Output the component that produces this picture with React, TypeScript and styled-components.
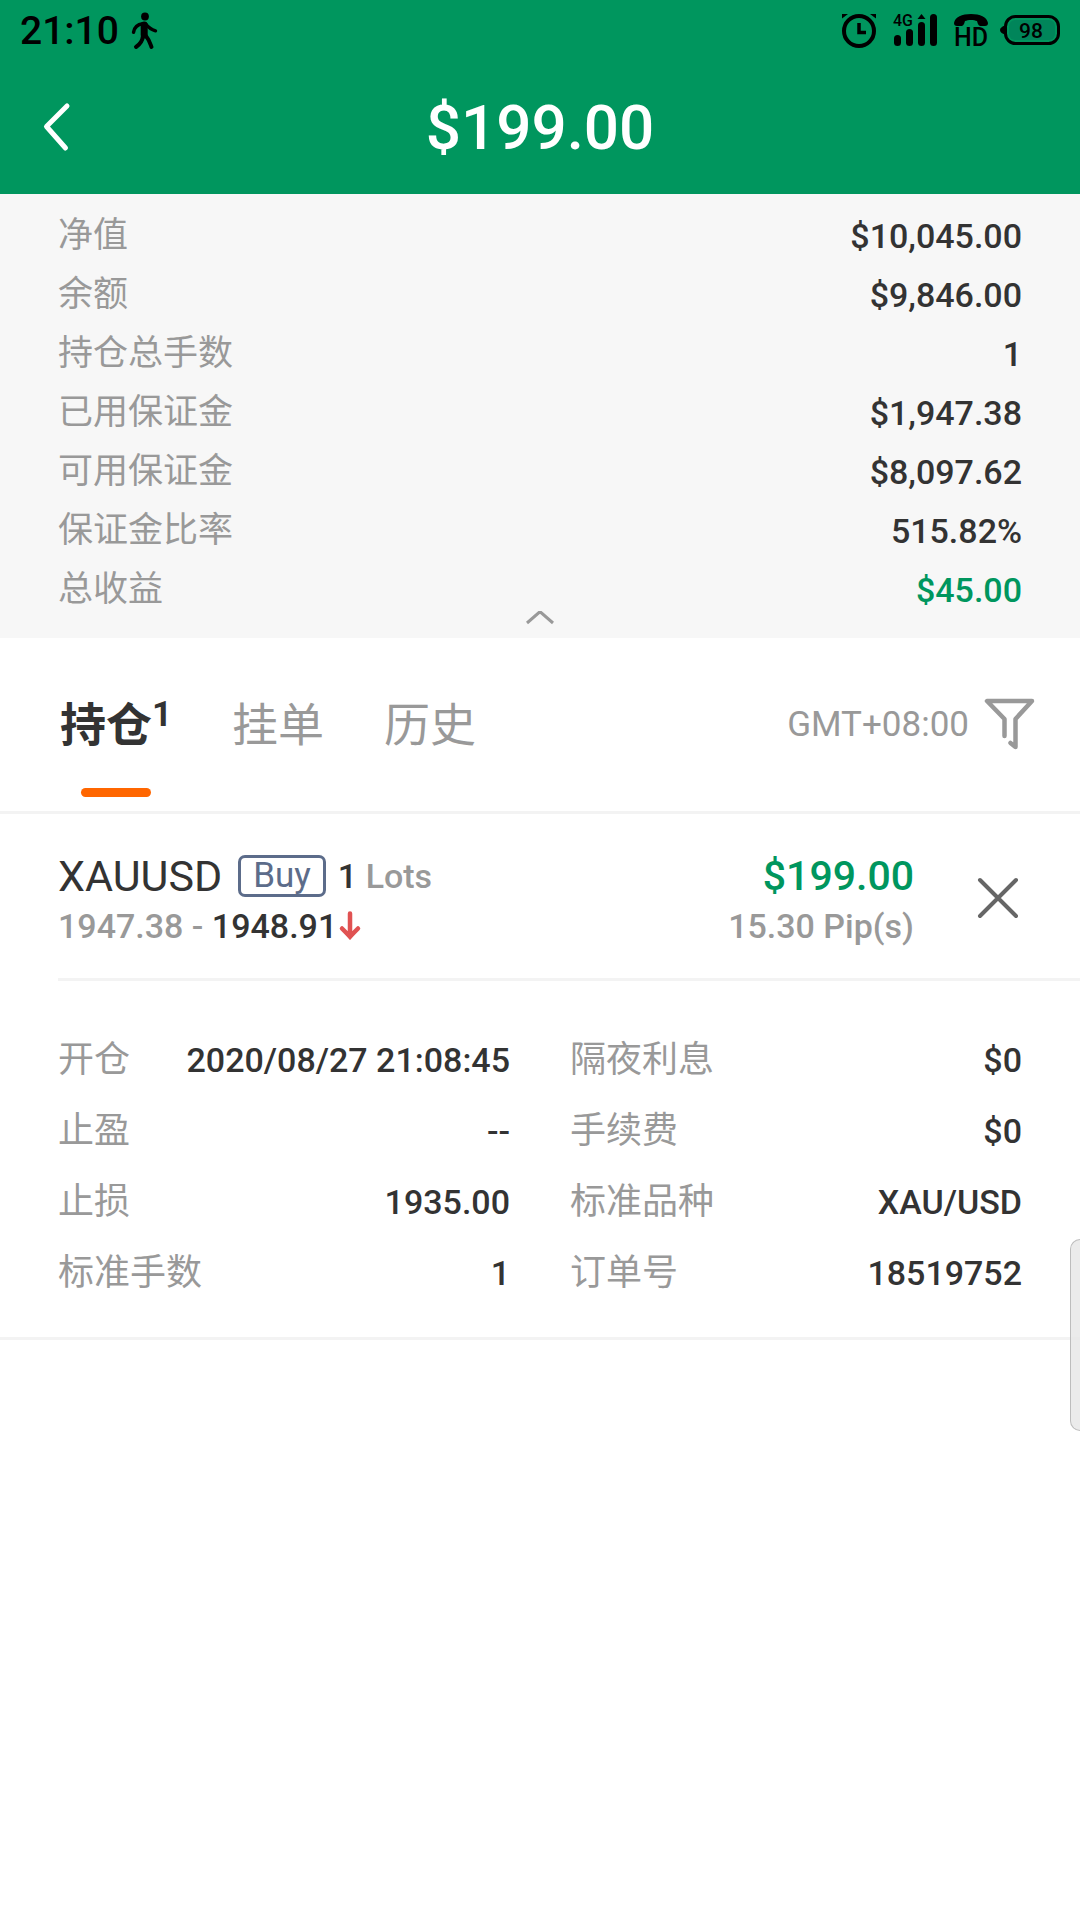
import React, { useState } from "react";
import styled, { createGlobalStyle } from "styled-components";

const green = "#00965e";
const ink = "#333333";
const muted = "#999999";
const rule = "#f3f3f3";

const GlobalStyle = createGlobalStyle`
  * { box-sizing: border-box; }
  body {
    margin: 0;
    background: #ffffff;
    color: ${ink};
    font-family: Roboto, "Noto Sans CJK SC", sans-serif;
    font-size: 34px;
    line-height: 50px;
  }
  button {
    margin: 0;
    padding: 0;
    border: 0;
    background: none;
    color: inherit;
    font: inherit;
    cursor: pointer;
  }
  dl, dd, h1, h2, p { margin: 0; }
  svg { display: block; flex: none; overflow: visible; }
`;

const Page = styled.div`
  position: relative;
  min-height: 100vh;
`;

const Top = styled.header`
  background: ${green};
`;

const StatusBar = styled.div`
  display: flex;
  align-items: center;
  justify-content: space-between;
  height: 62px;
  padding: 0 20px;
  color: #000000;
`;

const StatusGroup = styled.div`
  display: flex;
  align-items: center;
  gap: 12px;
`;

const Clock = styled.span`
  font-size: 39px;
  font-weight: 500;
`;

const TitleBar = styled.div`
  display: grid;
  grid-template-columns: 80px 1fr 80px;
  align-items: center;
  height: 132px;
  padding: 0 20px;
`;

const BackButton = styled.button`
  display: flex;
  align-items: center;
  height: 80px;
  padding-left: 20px;
`;

const Title = styled.h1`
  color: #ffffff;
  font-size: 62px;
  font-weight: 500;
  line-height: 72px;
  text-align: center;
`;

const Summary = styled.section`
  position: relative;
  padding: 12px 58px 19px;
  background: #f7f7f7;
`;

const SummaryRow = styled.div`
  display: flex;
  align-items: center;
  justify-content: space-between;
  height: 59px;
`;

const Label = styled.dt<{ $size: number }>`
  color: ${muted};
  font-size: ${(p) => p.$size}px;
`;

const Value = styled.dd<{ $gain?: boolean }>`
  color: ${(p) => (p.$gain ? green : ink)};
  font-weight: 500;
`;

const CollapseButton = styled.button`
  position: absolute;
  bottom: 0;
  left: 50%;
  padding: 12px 12px 14px;
  transform: translateX(-50%);
`;

const TabBar = styled.nav`
  display: flex;
  align-items: stretch;
  justify-content: space-between;
  height: 176px;
  padding: 0 44px 0 60px;
  border-bottom: 3px solid ${rule};
`;

const Tabs = styled.div`
  display: flex;
  gap: 60px;
`;

const Tab = styled.button<{ $active: boolean }>`
  position: relative;
  display: flex;
  align-items: center;
  color: ${(p) => (p.$active ? ink : muted)};
  font-size: 46px;
  font-weight: ${(p) => (p.$active ? 700 : 400)};

  &::after {
    content: "";
    position: absolute;
    bottom: 14px;
    left: calc(50% - 35px);
    width: 70px;
    height: 9px;
    border-radius: 5px;
    background: ${(p) => (p.$active ? "#ff6600" : "transparent")};
  }
`;

const Count = styled.span`
  padding-bottom: 20px;
  font-size: 35px;
`;

const Zone = styled.div`
  display: flex;
  align-items: center;
  gap: 15px;
  color: ${muted};
`;

const ZoneText = styled.span`
  font-size: 35px;
`;

const Position = styled.article`
  border-bottom: 3px solid ${rule};
`;

const PositionHead = styled.div`
  display: flex;
  align-items: center;
  margin-left: 58px;
  padding: 37px 58px 27px 0;
  border-bottom: 3px solid ${rule};
`;

const HeadColumn = styled.div<{ $end?: boolean }>`
  display: flex;
  flex: ${(p) => (p.$end ? "none" : "1")};
  flex-direction: column;
  align-items: ${(p) => (p.$end ? "flex-end" : "flex-start")};
`;

const Line = styled.div`
  display: flex;
  align-items: center;
  height: 50px;
  white-space: pre;
`;

const SymbolName = styled.h2`
  font-size: 43px;
  font-weight: 400;
`;

const Side = styled.span`
  margin: 0 12px 0 16px;
  padding: 0 12px;
  border: 3px solid #5c6c8a;
  border-radius: 7px;
  color: #5c6c8a;
  font-size: 35px;
  line-height: 36px;
`;

const Figure = styled.span<{ $muted?: boolean }>`
  color: ${(p) => (p.$muted ? muted : ink)};
  font-weight: 500;
`;

const Profit = styled.span`
  color: ${green};
  font-size: 41px;
  font-weight: 500;
`;

const CloseButton = styled.button`
  padding: 10px 0 16px 60px;
`;

const Details = styled.dl`
  display: grid;
  grid-template-columns: 1fr 1fr;
  column-gap: 60px;
  padding: 43px 58px 29px;
`;

const DetailRow = styled.div`
  display: flex;
  align-items: center;
  justify-content: space-between;
  height: 71px;
`;

const EdgeHandle = styled.div`
  position: absolute;
  top: 1239px;
  right: 0;
  width: 10px;
  height: 192px;
  border: 1px solid #bdbdbd;
  border-right: 0;
  border-radius: 10px 0 0 10px;
  background: rgba(230, 230, 230, 0.8);
`;

const WalkIcon = () => (
  <svg width="28" height="38" viewBox="0 0 28 38" fill="none" stroke="#000" strokeLinecap="round" strokeLinejoin="round" aria-hidden="true">
    <circle cx="14" cy="4.500" r="3.900" fill="#000" stroke="none" />
    <path d="M13.200 13v10" strokeWidth="7" />
    <path d="M11.500 11.800c-4.500 .5-8 3.500-9 8.500" strokeWidth="3.400" />
    <path d="M14.500 11.800c3 4 6 6 10 7" strokeWidth="3.400" />
    <path d="M12 24c-.5 4.500-2.500 8-7 11" strokeWidth="4" />
    <path d="M15 24c3 3.500 4 7 5.500 11" strokeWidth="4" />
  </svg>
);

const AlarmIcon = () => (
  <svg width="39" height="36" viewBox="0 0 39 36" fill="none" stroke="#000" aria-hidden="true">
    <circle cx="17" cy="18" r="15" strokeWidth="4" />
    <path d="M17 10v9.500h7" strokeWidth="3.500" />
    <path d="M0 5.500V1h6z M34 5.500V1h-6z" fill="#000" stroke="none" />
  </svg>
);

const SignalIcon = () => (
  <svg width="49" height="36" viewBox="0 0 49 36" aria-label="4G" role="img">
    <text x="0" y="13" fontFamily="Roboto, sans-serif" fontSize="16" fontWeight="500">4G</text>
    <rect x="1" y="22" width="7" height="11" rx="3.500" />
    <rect x="13" y="16" width="7" height="17" rx="3.500" />
    <rect x="25" y="9" width="7" height="24" rx="3.500" />
    <rect x="37" y="1" width="7" height="32" rx="3.500" />
    <path d="M24.500 6l4-5 4 5z" />
  </svg>
);

const HdIcon = () => (
  <svg width="34" height="36" viewBox="0 0 34 36" aria-label="HD" role="img">
    <path d="M0 10C1 4 8 1 17 1s16 3 17 9c0 2-1 3-3 3h-4c-2 0-3-1-4-5-3-1.500-9-1.500-12 0-1 4-2 5-4 5H3c-2 0-3-1-3-3z" />
    <text x="17" y="33" textAnchor="middle" fontFamily="Roboto, sans-serif" fontSize="25" fontWeight="500">HD</text>
  </svg>
);

const BatteryIcon = () => (
  <svg width="60" height="32" viewBox="0 0 60 32" aria-label="98" role="img">
    <path d="M5 10.500C2 11.500 0 13 0 15s2 3.500 5 4.500z" />
    <rect x="5.500" y="1.500" width="53" height="27" rx="10" fill="none" stroke="#000" strokeWidth="3" />
    <rect x="9" y="5" width="46" height="20" rx="6" fill="#00855a" />
    <text x="31" y="23" textAnchor="middle" fontFamily="Roboto, sans-serif" fontSize="21" fontWeight="500">98</text>
  </svg>
);

const BackIcon = () => (
  <svg width="30" height="50" viewBox="0 0 30 50" fill="none" stroke="#fff" strokeWidth="5" strokeLinecap="round" strokeLinejoin="round" aria-hidden="true">
    <path d="M27 3L6.500 23.500 25.500 45" />
  </svg>
);

const ChevronUpIcon = () => (
  <svg width="28" height="13" viewBox="0 0 28 13" fill="none" stroke={muted} strokeWidth="3" aria-hidden="true">
    <path d="M1 12L13 1.500h2L27 12" />
  </svg>
);

const FilterIcon = () => (
  <svg width="52" height="54" viewBox="0 0 52 54" fill="none" stroke={muted} strokeWidth="4.500" strokeLinecap="round" strokeLinejoin="round" aria-hidden="true">
    <path d="M20.500 38V21L3 3h45L31.500 21v28l-5-4" />
  </svg>
);

const ArrowDownIcon = () => (
  <svg width="24" height="32" viewBox="0 0 24 32" aria-hidden="true">
    <path d="M13 3.500v21M5 18.500l8 8 8-8" fill="none" stroke="#e05252" strokeWidth="4.500" strokeLinecap="round" />
    <path d="M8 24l5 6 5-6z" fill="#e05252" />
  </svg>
);

const CloseIcon = () => (
  <svg width="48" height="48" viewBox="0 0 48 48" fill="none" stroke="#666" strokeWidth="4" strokeLinecap="round" aria-hidden="true">
    <path d="M6 6l36 36M42 6L6 42" />
  </svg>
);

const summary = [
  { label: "净值", value: "$10,045.00" },
  { label: "余额", value: "$9,846.00" },
  { label: "持仓总手数", value: "1" },
  { label: "已用保证金", value: "$1,947.38" },
  { label: "可用保证金", value: "$8,097.62" },
  { label: "保证金比率", value: "515.82%" },
  { label: "总收益", value: "$45.00", gain: true },
];

const details = [
  ["开仓", "2020/08/27 21:08:45"],
  ["隔夜利息", "$0"],
  ["止盈", "--"],
  ["手续费", "$0"],
  ["止损", "1935.00"],
  ["标准品种", "XAU/USD"],
  ["标准手数", "1"],
  ["订单号", "18519752"],
];

const tabs = [{ name: "持仓", count: 1 }, { name: "挂单" }, { name: "历史" }];

export default function App() {
  const [active, setActive] = useState(0);

  return (
    <Page>
      <GlobalStyle />
      <Top>
        <StatusBar>
          <StatusGroup>
            <Clock>21:10</Clock>
            <WalkIcon />
          </StatusGroup>
          <StatusGroup>
            <AlarmIcon />
            <SignalIcon />
            <HdIcon />
            <BatteryIcon />
          </StatusGroup>
        </StatusBar>
        <TitleBar>
          <BackButton aria-label="返回">
            <BackIcon />
          </BackButton>
          <Title>$199.00</Title>
        </TitleBar>
      </Top>

      <main>
        <Summary>
          <dl>
            {summary.map((row) => (
              <SummaryRow key={row.label}>
                <Label $size={35}>{row.label}</Label>
                <Value $gain={row.gain}>{row.value}</Value>
              </SummaryRow>
            ))}
          </dl>
          <CollapseButton aria-label="收起">
            <ChevronUpIcon />
          </CollapseButton>
        </Summary>

        <TabBar>
          <Tabs>
            {tabs.map((tab, i) => (
              <Tab key={tab.name} $active={i === active} onClick={() => setActive(i)}>
                {tab.name}
                {tab.count && <Count>{tab.count}</Count>}
              </Tab>
            ))}
          </Tabs>
          <Zone>
            <ZoneText>GMT+08:00</ZoneText>
            <button aria-label="筛选">
              <FilterIcon />
            </button>
          </Zone>
        </TabBar>

        <Position>
          <PositionHead>
            <HeadColumn>
              <Line>
                <SymbolName>XAUUSD</SymbolName>
                <Side>Buy</Side>
                <Figure>1 </Figure>
                <Figure $muted>Lots</Figure>
              </Line>
              <Line>
                <Figure $muted>1947.38 - </Figure>
                <Figure>1948.91</Figure>
                <ArrowDownIcon />
              </Line>
            </HeadColumn>
            <HeadColumn $end>
              <Line>
                <Profit>$199.00</Profit>
              </Line>
              <Line>
                <Figure $muted>15.30 Pip(s)</Figure>
              </Line>
            </HeadColumn>
            <CloseButton aria-label="平仓">
              <CloseIcon />
            </CloseButton>
          </PositionHead>
          <Details>
            {details.map(([label, value]) => (
              <DetailRow key={label}>
                <Label $size={36}>{label}</Label>
                <Value>{value}</Value>
              </DetailRow>
            ))}
          </Details>
        </Position>
      </main>
      <EdgeHandle />
    </Page>
  );
}
